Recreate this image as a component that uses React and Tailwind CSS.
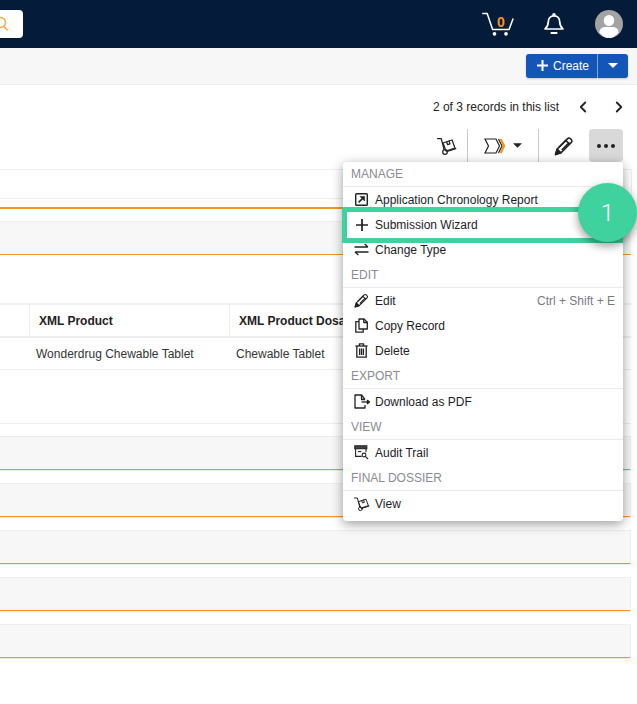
import React from 'react';
import { ChevronLeft, ChevronRight } from 'lucide-react';

function HandTruck({ size = 20 }) {
  return (
    <svg width={size} height={size} viewBox="0 0 20 20" fill="none" stroke="#222" strokeWidth="1.25" strokeLinejoin="round" strokeLinecap="round">
      <path d="M0.6 2.5h3.6l2.9 11" />
      <circle cx="8" cy="16" r="2.3" />
      <path d="M10.2 15.4l8.6-2.8" />
      <path d="M6 7l9-3 3 8-9 3z" />
      <path d="M9.6 5.8l1 2.9 2.4-.8-1-2.9" />
    </svg>
  );
}

function PencilIcon({ size = 20 }) {
  return (
    <svg width={size} height={size} viewBox="0 0 20 20" fill="none" stroke="#222" strokeWidth="1.5" strokeLinejoin="round">
      <path d="M1.5 18.5l1.6-5.4L13.6 2.6a1.9 1.9 0 0 1 2.7 0l1.1 1.1a1.9 1.9 0 0 1 0 2.7L6.9 16.9z" />
      <path d="M1.5 18.5l1.6-5.4 3.8 3.8z" fill="#222" />
      <path d="M11.8 4.4l3.8 3.8M5 11.2l7.6-7.6M7.8 14l7.6-7.6" />
    </svg>
  );
}

function ProcessIcon() {
  return (
    <svg width="22" height="16" viewBox="0 0 22 16" fill="none" strokeLinejoin="miter">
      <path d="M1 1h11l3.5 7-3.5 7H1l3.5-7z" stroke="#222" strokeWidth="1.2" />
      <path d="M14.5 1l3.5 7-3.5 7" stroke="#222" strokeWidth="1.2" />
      <path d="M16.6 1l3.5 7-3.5 7" stroke="#f7941d" strokeWidth="2.2" />
    </svg>
  );
}

function Caret({ className }) {
  return (
    <svg viewBox="0 0 10 5" className={className}>
      <path d="M0 0h10L5 5z" fill="currentColor" />
    </svg>
  );
}

function PlusIcon({ size = 11, color = 'currentColor', weight = 2 }) {
  return (
    <svg width={size} height={size} viewBox="0 0 11 11" fill="none" stroke={color} strokeWidth={weight}>
      <path d="M5.5 0v11M0 5.5h11" />
    </svg>
  );
}

function CartIcon() {
  return (
    <svg width="32" height="24" viewBox="0 0 32 24" fill="none" stroke="#fff" strokeWidth="1.5" strokeLinecap="round" strokeLinejoin="round">
      <path d="M0.8 1.5h4.4l5.4 16h15.6" />
      <path d="M27 17.5l4-10.5" />
      <circle cx="12.5" cy="21.8" r="1.1" fill="#fff" />
      <circle cx="24" cy="21.8" r="1.1" fill="#fff" />
    </svg>
  );
}

function BellIcon() {
  return (
    <svg width="20" height="22" viewBox="0 0 20 22" fill="none" stroke="#fff" strokeWidth="1.7" strokeLinejoin="round">
      <path d="M10 2.8c-3.6 0-5.7 2.6-5.7 6 0 3.8-1 5.2-3.2 7.2h17.8c-2.2-2-3.2-3.4-3.2-7.2 0-3.4-2.1-6-5.7-6z" />
      <circle cx="10" cy="1.8" r="0.9" fill="#fff" />
      <path d="M7.4 20h5.2" strokeLinecap="round" strokeWidth="2" />
    </svg>
  );
}

function Avatar() {
  return (
    <svg width="28" height="28" viewBox="0 0 28 28">
      <circle cx="14" cy="14" r="14" fill="#a3a3a3" />
      <ellipse cx="14" cy="10.5" rx="5.2" ry="5.6" fill="#fff" />
      <path d="M4.4 22.4c0-3.6 3.4-5.4 5.6-5.4h8c2.2 0 5.6 1.8 5.6 5.4-2.4 3.4-5.8 5.6-9.6 5.6s-7.2-2.2-9.6-5.6z" fill="#fff" />
    </svg>
  );
}

function ReportIcon() {
  return (
    <svg width="13" height="13" viewBox="0 0 13 13" fill="none" stroke="#222" strokeWidth="1.4">
      <rect x="0.7" y="0.7" width="11.6" height="11.6" rx="0.8" />
      <path d="M3.6 9.4l5.2-5.2" strokeWidth="1.6" />
      <path d="M5 3.4h4.6V8z" fill="#222" strokeWidth="0.6" />
    </svg>
  );
}

function SwapIcon() {
  return (
    <svg width="15" height="13" viewBox="0 0 15 13" fill="none" stroke="#222" strokeWidth="1.3" strokeLinejoin="round">
      <path d="M0.5 4h13.4M10.6 1l3.4 3M14.5 9H1.1M4.4 12L1 9" />
    </svg>
  );
}

function CopyIcon() {
  return (
    <svg width="13" height="15" viewBox="0 0 13 15" fill="none" stroke="#222" strokeWidth="1.3" strokeLinejoin="round">
      <path d="M4 11V1h5l3.3 3.3V11z" />
      <path d="M8.8 1v3.5h3.5" />
      <path d="M4 3.6H0.8v10.6h7.4V11" />
    </svg>
  );
}

function TrashIcon() {
  return (
    <svg width="13" height="15" viewBox="0 0 13 15" fill="none" stroke="#222" strokeWidth="1.3" strokeLinejoin="round">
      <path d="M0.4 3h12.2" />
      <path d="M4.4 3V0.8h4.2V3" />
      <path d="M1.8 3v11.2h9.4V3" />
      <path d="M4.6 5.4v6.6M6.5 5.4v6.6M8.4 5.4v6.6" />
    </svg>
  );
}

function PdfIcon() {
  return (
    <svg width="16" height="15" viewBox="0 0 16 15" fill="none" stroke="#222" strokeWidth="1.3" strokeLinejoin="round">
      <path d="M11 5.5L7.5 1H1v13h10v-3" />
      <path d="M7.5 1v4.5H11" />
      <path d="M7.5 8h6.5" />
      <path d="M13.4 6.4L15.6 8l-2.2 1.6z" fill="#222" />
    </svg>
  );
}

function AuditIcon() {
  return (
    <svg width="15" height="15" viewBox="0 0 15 15" fill="none" stroke="#222" strokeWidth="1.1">
      <path d="M0.8 0.8h12v3h-12z" fill="#444" />
      <path d="M1.6 3.8v7.6h6M12 3.8v3.4" />
      <path d="M4 6.6h3.4" />
      <circle cx="10" cy="10" r="1.9" />
      <path d="M11.4 11.4l2.6 2.6" />
    </svg>
  );
}

function MenuHeader({ children }) {
  return (
    <div className="h-[25px] pl-2 flex items-center border-b border-[#ebebeb] text-[12px] text-[#888b92] box-content">
      {children}
    </div>
  );
}

function MenuItem({ icon, label, shortcut }) {
  return (
    <div className="h-[25px] flex items-center pl-[10px] pr-2 text-[12px] text-[#1c1c28]">
      <span className="w-[17px] mr-[5px] flex items-center justify-center shrink-0">{icon}</span>
      <span className="flex-1">{label}</span>
      {shortcut && <span className="text-[#77797f]">{shortcut}</span>}
    </div>
  );
}

function SectionBar() {
  return (
    <div className="mt-[12px] mr-[6px] border-t border-r border-[#eeeeee]">
      <div className="h-[32px] bg-[#f7f7f7]" />
      <div className="h-px bg-[#f7941d]" />
      <div className="h-px bg-[#eeeeee]" />
    </div>
  );
}

export default function App() {
  return (
    <div className="relative w-[637px] h-[704px] overflow-hidden bg-white font-['Liberation_Sans',Arial,sans-serif] text-[12px]">
      <header className="h-12 bg-[#041b3a] flex items-center pr-[14px]">
        <div className="w-[23px] h-7 bg-white rounded-r-[4px] overflow-hidden flex items-center justify-end pr-[13px]">
          <svg width="16" height="16" viewBox="0 0 16 16" fill="none" stroke="#f7a83e" strokeWidth="1.4" className="shrink-0">
            <circle cx="6.5" cy="6.5" r="5" />
            <path d="M10 10.5l3.5 4" strokeWidth="1.7" />
          </svg>
        </div>
        <div className="ml-auto relative w-8 h-6 mr-[30px]">
          <CartIcon />
          <span className="absolute left-[15px] top-[3px] text-[14px] leading-[14px] font-bold text-[#f7941d]">0</span>
        </div>
        <div className="mr-[31px] flex"><BellIcon /></div>
        <Avatar />
      </header>

      <div className="h-[37px] bg-[#f7f7f7] border-b border-[#ebebeb] flex items-center justify-end pr-[9px]">
        <div className="h-6 w-[102px] mb-[1px] rounded-[3px] bg-[#1455b8] flex items-center text-white shadow-[0_1px_2px_rgba(0,0,0,0.2)]">
          <div className="w-[72px] h-full flex items-center pl-[11px] gap-[5px] border-r border-[#7ea4dc]">
            <PlusIcon />
            <span>Create</span>
          </div>
          <div className="flex-1 flex justify-center"><Caret className="w-[10px] h-[5px]" /></div>
        </div>
      </div>

      <div className="h-[84px]">
        <div className="h-[44px] flex items-center justify-end text-[#222]">
          <span>2 of 3 records in this list</span>
          <ChevronLeft size={18} strokeWidth={2.4} className="ml-[15px]" />
          <ChevronRight size={18} strokeWidth={2.4} className="ml-[18px] mr-[9px]" />
        </div>
        <div className="h-[40px] flex items-start justify-end pr-[14px]">
          <div className="flex items-center h-[33px]">
            <HandTruck />
            <div className="w-px h-[33px] bg-[#c9c9c9] ml-[10px] mr-[16px]" />
            <ProcessIcon />
            <Caret className="ml-[7px] w-[9px] h-[5px] text-[#222]" />
            <div className="w-px h-[33px] bg-[#c9c9c9] ml-[16px] mr-[15px]" />
            <PencilIcon />
            <div className="ml-[15px] w-[34px] h-[33px] rounded-[4px] bg-[#d9d9d9] flex items-center justify-center gap-[3px]">
              <span className="w-[4px] h-[4px] rounded-full bg-[#222]" />
              <span className="w-[4px] h-[4px] rounded-full bg-[#222]" />
              <span className="w-[4px] h-[4px] rounded-full bg-[#222]" />
            </div>
          </div>
        </div>
      </div>

      <div className="h-[30px] mr-[5px] border border-l-0 border-[#eeeeee]" />
      <div className="h-[2px] mt-[8px] mr-[6px] bg-[#f7941d]" />
      <div className="mt-[12px] mr-[6px] h-[34px] bg-[#f7f7f7] border-t border-[#eeeeee] border-b-[#f7941d] border-b" />

      <div className="mt-[48px] mr-[6px] border-t-2 border-[#f1f1f1]">
        <div className="grid grid-cols-[30px_200px_1fr] h-[33px] border-b-2 border-[#eeeeee] font-bold text-[#222]">
          <div className="border-r border-[#eeeeee]" />
          <div className="border-r border-[#eeeeee] pl-[9px] flex items-center">XML Product</div>
          <div className="pl-[9px] flex items-center whitespace-nowrap overflow-hidden w-[114px]">XML Product Dosa</div>
        </div>
        <div className="grid grid-cols-[30px_200px_1fr] h-[32px] border-b border-[#eeeeee] text-[#333]">
          <div />
          <div className="pl-[6px] flex items-center">Wonderdrug Chewable Tablet</div>
          <div className="pl-[6px] flex items-center">Chewable Tablet</div>
        </div>
      </div>

      <div className="mt-[53px] mr-[6px] h-px bg-[#eeeeee]" />
      <SectionBar />
      <SectionBar />
      <SectionBar />
      <SectionBar />
      <SectionBar />

      <div className="absolute left-[343px] top-[162px] w-[280px] h-[359px] bg-white rounded-[4px] shadow-[0_3px_12px_rgba(0,0,0,0.4)]">
        <div className="h-[24px] pl-2 flex items-center border-b border-[#ebebeb] text-[#888b92] box-content">MANAGE</div>
        <MenuItem icon={<ReportIcon />} label="Application Chronology Report" />
        <MenuItem icon={<PlusIcon size={12} color="#222" weight={1.6} />} label="Submission Wizard" />
        <MenuItem icon={<SwapIcon />} label="Change Type" />
        <MenuHeader>EDIT</MenuHeader>
        <MenuItem icon={<PencilIcon size={15} />} label="Edit" shortcut="Ctrl + Shift + E" />
        <MenuItem icon={<CopyIcon />} label="Copy Record" />
        <MenuItem icon={<TrashIcon />} label="Delete" />
        <MenuHeader>EXPORT</MenuHeader>
        <MenuItem icon={<PdfIcon />} label="Download as PDF" />
        <MenuHeader>VIEW</MenuHeader>
        <MenuItem icon={<AuditIcon />} label="Audit Trail" />
        <MenuHeader>FINAL DOSSIER</MenuHeader>
        <MenuItem icon={<HandTruck size={16} />} label="View" />
      </div>

      <div className="absolute left-[342px] top-[207px] w-[281px] h-[36px] border-[5px] border-[#3fd19e]" />
      <div className="absolute left-[578px] top-[183px] w-[59px] h-[59px] rounded-full bg-[#3fd19e] shadow-[0_4px_10px_rgba(0,0,0,0.4)] flex items-center justify-center text-white text-[24px] font-['Roboto',sans-serif] font-light">
        1
      </div>
    </div>
  );
}
